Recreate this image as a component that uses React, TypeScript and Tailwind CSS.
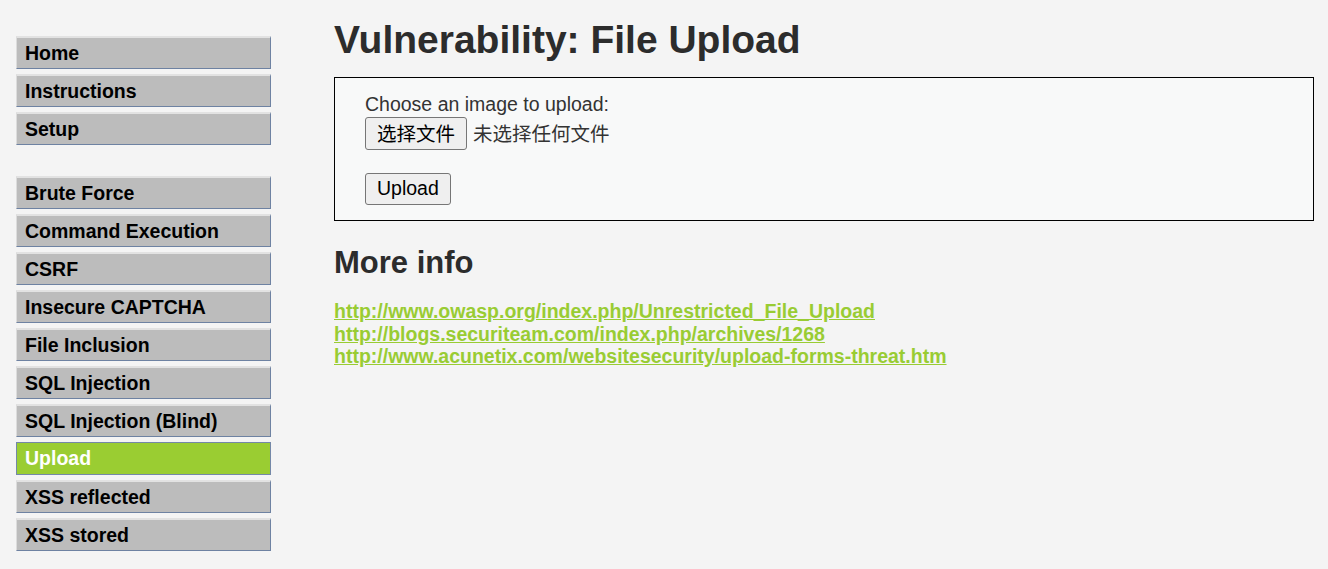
import React from "react";

const group1 = ["Home", "Instructions", "Setup"];
const group2 = [
  "Brute Force",
  "Command Execution",
  "CSRF",
  "Insecure CAPTCHA",
  "File Inclusion",
  "SQL Injection",
  "SQL Injection (Blind)",
  "Upload",
  "XSS reflected",
  "XSS stored",
];

function MenuItem({ label }: { label: string }) {
  const active = label === "Upload";
  return (
    <li
      className={
        active
          ? "mb-[5px] h-[33px] border border-[#7488a8] bg-[#9acd32] pl-[8px] text-[19.5px] font-bold leading-[31px] text-white"
          : "mb-[5px] h-[33px] border-t-2 border-l border-r-[1.5px] border-b-[1.5px] border-t-[#e2e2e2] border-l-[#dcdcdc] border-r-[#6e82a2] border-b-[#6e82a2] bg-[#bcbcbc] pl-[8px] text-[19.5px] font-bold leading-[30px] text-black"
      }
    >
      {label}
    </li>
  );
}

export default function App() {
  return (
    <div
      className="flex min-h-[569px] w-full bg-[#f4f4f4] text-[#2f2f2f]"
      style={{ fontFamily: '"Liberation Sans", Arial, "Noto Sans CJK SC", sans-serif' }}
    >
      <div className="w-[271px] shrink-0 pl-[16px] pt-[36px]">
        <ul className="w-[255px]">
          {group1.map((l) => (
            <MenuItem key={l} label={l} />
          ))}
        </ul>
        <ul className="mt-[31px] w-[255px]">
          {group2.map((l) => (
            <MenuItem key={l} label={l} />
          ))}
        </ul>
      </div>
      <div className="ml-[63px] w-[980px] shrink-0">
        <h1 className="mt-[17px] text-[39px] font-bold leading-[46px] text-[#2c2c2c]">
          Vulnerability: File Upload
        </h1>
        <div className="mt-[14px] h-[144px] border border-black bg-[#f8f9f9] pl-[30px] pt-[15px]">
          <div className="text-[19.5px] leading-[22px] text-[#333]">Choose an image to upload:</div>
          <div className="mt-[2px] flex items-center">
            <button className="h-[33px] rounded-[3px] border border-[#767676] bg-[#efefef] px-[11px] pt-[2px] text-[19.5px] leading-none text-black">
              选择文件
            </button>
            <span className="ml-[6px] pt-[3px] text-[19.5px] text-[#333]">未选择任何文件</span>
          </div>
          <button className="mt-[23px] h-[32px] rounded-[3px] border border-[#767676] bg-[#efefef] px-[11px] text-[19.5px] leading-none text-black">
            Upload
          </button>
        </div>
        <h2 className="mt-[24px] text-[31px] font-bold leading-[36px] text-[#2c2c2c]">More info</h2>
        <ul className="mt-[19px] text-[19.5px] font-bold leading-[22.5px] text-[#99cc33]">
          <li>
            <a className="underline" href="#">
              http://www.owasp.org/index.php/Unrestricted_File_Upload
            </a>
          </li>
          <li>
            <a className="underline" href="#">
              http://blogs.securiteam.com/index.php/archives/1268
            </a>
          </li>
          <li>
            <a className="underline" href="#">
              http://www.acunetix.com/websitesecurity/upload-forms-threat.htm
            </a>
          </li>
        </ul>
      </div>
    </div>
  );
}
